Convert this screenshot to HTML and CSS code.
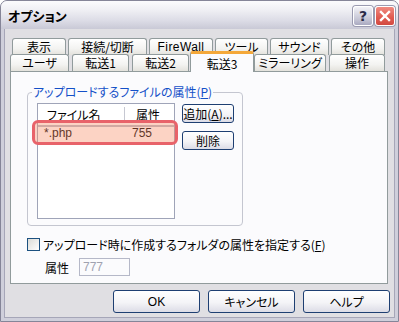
FILE: index.html
```html
<!DOCTYPE html>
<html lang="ja">
<head>
<meta charset="utf-8">
<link rel="stylesheet" href="styles.css">
</head>
<body>
<div class="window">
  <div class="titlebar">
    <span class="title">オプション</span>
    <div class="caption-btns">
      <span class="cap-btn help">?</span>
      <span class="cap-btn close">
        <svg width="12" height="12" viewBox="0 0 12 12"><path d="M2 2 L10 10 M10 2 L2 10" stroke="#fff" stroke-width="2.4" stroke-linecap="square"/></svg>
      </span>
    </div>
  </div>
  <div class="client">
    <div class="tabs">
      <div class="tabrow back">
        <div class="tab t1">表示</div>
        <div class="tab t2">接続/切断</div>
        <div class="tab t3 latin">FireWall</div>
        <div class="tab t4">ツール</div>
        <div class="tab t5">サウンド</div>
        <div class="tab t6">その他</div>
      </div>
      <div class="tabrow front">
        <div class="tab u1">ユーザ</div>
        <div class="tab u2">転送1</div>
        <div class="tab u3">転送2</div>
        <div class="tab u4 selected">転送3</div>
        <div class="tab u5">ミラーリング</div>
        <div class="tab u6">操作</div>
      </div>
    </div>
    <div class="panel">
      <fieldset class="group">
        <legend>アップロードするファイルの属性(<u>P</u>)</legend>
        <div class="group-body">
          <div class="listview">
            <div class="lv-header">
              <span class="col c-name">ファイル名</span>
              <span class="col c-attr">属性</span>
            </div>
            <div class="lv-row">
              <span class="col c-name latin">*.php</span>
              <span class="col c-attr latin">755</span>
            </div>
          </div>
          <div class="side-btns">
            <button class="btn small">追加(<u>A</u>)...</button>
            <button class="btn small">削除</button>
          </div>
          <div class="highlight"></div>
        </div>
      </fieldset>
      <div class="check-row">
        <span class="checkbox"></span>
        <span class="check-label">アップロード時に作成するフォルダの属性を指定する(<u>F</u>)</span>
      </div>
      <div class="attr-row">
        <span class="attr-label">属性</span>
        <span class="input disabled latin">777</span>
      </div>
    </div>
    <div class="buttons">
      <button class="btn big latin">OK</button>
      <button class="btn big">キャンセル</button>
      <button class="btn big">ヘルプ</button>
    </div>
  </div>
</div>
</body>
</html>
```

FILE: styles.css
```css
* { box-sizing: border-box; }
html, body { margin: 0; padding: 0; }
body {
  width: 399px;
  height: 322px;
  overflow: hidden;
  font-family: "Noto Sans CJK JP", "Noto Sans", sans-serif;
  font-size: 12px;
  font-feature-settings: "palt";
  color: #000;
}
.latin {
  font-family: "Liberation Sans", "Noto Sans", sans-serif;
  font-size: 12px;
}
.window {
  width: 399px;
  height: 322px;
  border: 1px solid #858598;
  border-radius: 7px 7px 0 0;
  background: #cfcfdb;
  display: flex;
  flex-direction: column;
  overflow: hidden;
}
.titlebar {
  height: 28px;
  flex: none;
  display: flex;
  align-items: center;
  justify-content: space-between;
  padding: 0 3px 0 7px;
  background: linear-gradient(#fbfbfd 0%, #eeeef3 35%, #dcdce6 70%, #c9c9d6 100%);
}
.title {
  font-weight: bold;
  font-size: 13px;
  color: #000;
  margin-top: 1px;
}
.caption-btns { display: flex; gap: 2px; margin-top: 2px; }
.cap-btn {
  width: 20px;
  height: 20px;
  border: 1px solid #fff;
  border-radius: 3px;
  display: flex;
  align-items: center;
  justify-content: center;
  box-shadow: 0 0 0 1px #9a9ab0;
}
.help {
  background: linear-gradient(#f2f2f7, #c4c4d4 70%, #a9a9c0);
  color: #2b2b48;
  font-family: "DejaVu Sans", sans-serif;
  font-weight: bold;
  font-size: 14px;
}
.close {
  background: linear-gradient(#f08a80, #e05a50 60%, #d24a42);
}
.client {
  flex: 1;
  margin: 0 3px 3px;
  background: #e0dfe3;
  border: 1px solid #a6a6b8;
  border-top: none;
  padding: 9px 0 0 5px;
  display: flex;
  flex-direction: column;
}
.tabs { width: 378px; }
.tabrow { display: flex; }
.tabrow.back { height: 16px; padding-left: 2px; gap: 2px; }
.tabrow.front { height: 17px; align-items: flex-end; }
.tab {
  height: 17px;
  border: 1px solid #919b9c;
  border-bottom: none;
  border-radius: 3px 3px 0 0;
  background: linear-gradient(#ffffff, #f3f3f1 60%, #e3e2dc);
  display: flex;
  align-items: center;
  justify-content: center;
  line-height: 14px;
  white-space: nowrap;
}
.tab.latin { letter-spacing: 0.4px; }
.t1 { width: 54px; }
.t2 { width: 79px; }
.t3 { width: 64px; }
.t4 { width: 53px; }
.t5 { width: 59px; }
.t6 { width: 54px; }
.u1 { width: 59px; }
.u2 { width: 57px; margin-left: 3px; }
.u3 { width: 57px; margin-left: 3px; }
.u4 { width: 64px; margin-left: 1px; }
.u5 { width: 72px; }
.u6 { width: 56px; margin-left: 3px; }
.tab.selected {
  height: 21px;
  margin-bottom: -1px;
  position: relative;
  z-index: 2;
  background: #fbfbfd;
  border-top: 3px solid #f4a83a;
  padding-top: 1px;
}
.panel {
  width: 378px;
  height: 213px;
  border: 1px solid #919b9c;
  background: #fbfbfd;
  padding: 13px 0 0 16px;
  display: flex;
  flex-direction: column;
}
.group {
  width: 216px;
  height: 141px;
  margin: 0;
  border: 1px solid #c4c6d0;
  border-radius: 4px;
  padding: 4px 0 0 9px;
}
.group legend {
  color: #1450c8;
  line-height: 14px;
  padding: 0 1px;
  margin-left: -5px;
  white-space: nowrap;
}
.group-body { display: flex; gap: 7px; position: relative; }
.listview {
  width: 138px;
  height: 116px;
  border: 1px solid #9fa4b8;
  background: #fff;
}
.lv-header {
  height: 23px;
  display: flex;
  align-items: center;
  border-bottom: 2px solid #b9bcc8;
}
.lv-header .c-name {
  width: 87px;
  padding-left: 9px;
  border-right: 1px solid #c6c8d2;
  height: 16px;
  line-height: 16px;
}
.lv-header .c-attr { padding-left: 11px; }
.lv-row {
  height: 12px;
  display: flex;
  align-items: center;
}
.lv-row .c-name { width: 88px; padding-left: 6px; }
.lv-row .c-attr { padding-left: 6px; }
.side-btns {
  display: flex;
  flex-direction: column;
  gap: 8px;
  padding-top: 1px;
}
.btn {
  font-family: "Noto Sans CJK JP", "Noto Sans", sans-serif;
  font-size: 12px;
  font-feature-settings: "palt";
  color: #000;
  border: 1px solid #1e3f72;
  border-radius: 3px;
  background: linear-gradient(#ffffff, #f4f4f7 55%, #dcdce6);
  padding: 0;
  line-height: 14px;
  white-space: nowrap;
}
.btn.latin { font-family: "Liberation Sans", sans-serif; }
.btn.small { width: 52px; height: 19px; }
.highlight {
  position: absolute;
  left: -5px;
  top: 17px;
  width: 146px;
  height: 25px;
  border: 3px solid #e8636a;
  border-radius: 6px;
  background: rgba(248, 140, 100, 0.38);
}
.check-row {
  display: flex;
  align-items: center;
  margin-top: 12px;
  height: 13px;
}
.checkbox {
  width: 13px;
  height: 13px;
  border: 1px solid #1c5180;
  background: linear-gradient(135deg, #dcdcd7, #fff);
  margin-right: 3px;
}
.attr-row {
  display: flex;
  align-items: center;
  margin-top: 7px;
  padding-left: 18px;
}
.attr-label { width: 34px; }
.input {
  width: 51px;
  height: 18px;
  border: 1px solid #b5b8c8;
  padding-left: 3px;
  line-height: 16px;
}
.input.disabled { color: #a0a2b0; background: #fbfbfd; }
.buttons {
  display: flex;
  gap: 8px;
  margin-top: 6px;
  padding-left: 103px;
}
.btn.big { width: 87px; height: 23px; }
```
